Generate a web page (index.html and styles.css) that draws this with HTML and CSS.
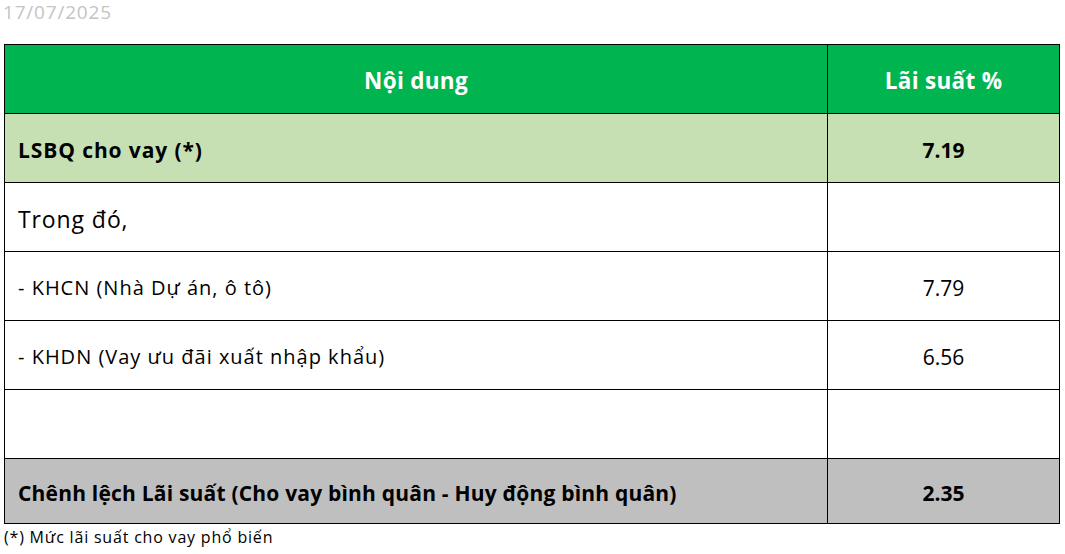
FILE: index.html
```html
<!DOCTYPE html>
<html lang="vi">
<head>
<meta charset="utf-8">
<link rel="stylesheet" href="styles.css">
</head>
<body>
<div class="page">
  <div class="date">17/07/2025</div>
  <table class="rates">
    <tr class="head">
      <th class="c1">Nội dung</th>
      <th class="c2">Lãi suất %</th>
    </tr>
    <tr class="hl-green">
      <td class="c1 bold wide">LSBQ cho vay (*)</td>
      <td class="c2 bold num">7.19</td>
    </tr>
    <tr>
      <td class="c1 big">Trong đó,</td>
      <td class="c2"></td>
    </tr>
    <tr>
      <td class="c1">- KHCN (Nhà Dự án, ô tô)</td>
      <td class="c2 num">7.79</td>
    </tr>
    <tr>
      <td class="c1">- KHDN (Vay ưu đãi xuất nhập khẩu)</td>
      <td class="c2 num">6.56</td>
    </tr>
    <tr>
      <td class="c1"></td>
      <td class="c2"></td>
    </tr>
    <tr class="hl-gray">
      <td class="c1 bold">Chênh lệch Lãi suất (Cho vay bình quân - Huy động bình quân)</td>
      <td class="c2 bold num">2.35</td>
    </tr>
  </table>
  <div class="note">(*) Mức lãi suất cho vay phổ biến</div>
</div>
</body>
</html>
```

FILE: styles.css
```css
html, body {
  margin: 0;
  padding: 0;
  background: #ffffff;
}
body {
  font-family: "Open Sans", "Lato", sans-serif;
  color: #000;
}
.page {
  padding: 0 0 0 4px;
}
.date {
  color: #c4c4c4;
  font-size: 19px;
  letter-spacing: 0.8px;
  line-height: 24px;
  margin-left: -1px;
  height: 44px;
}
.rates {
  border-collapse: collapse;
  width: 1056px;
  table-layout: fixed;
}
.rates th, .rates td {
  border: 1px solid #000;
  height: 65px;
  padding: 3px 0 0 13px;
  font-size: 20px;
  letter-spacing: 1px;
  vertical-align: middle;
}
.rates td.c1 { width: 809px; text-align: left; }
.rates th.c1 { width: 822px; }
.rates .c2 { text-align: center; padding-left: 0; }
.head th {
  background: #00b44f;
  color: #fff;
  font-weight: 700;
  font-size: 22.5px;
  letter-spacing: 0.3px;
  text-align: center;
  padding: 3px 0 0 0;
}
.hl-green td { background: #c6e0b4; }
.rates .hl-gray td { background: #bfbfbf; height: 61px; }
.rates .bold { font-weight: 700; font-size: 21px; letter-spacing: 0.2px; }
.rates .wide { letter-spacing: 0.9px; }
.rates .big { font-size: 23px; letter-spacing: 0.9px; }
.rates .num { font-size: 21px; letter-spacing: 0; }
.note {
  font-size: 16px;
  letter-spacing: 0.8px;
  line-height: 20px;
  padding-top: 3px;
}
```
